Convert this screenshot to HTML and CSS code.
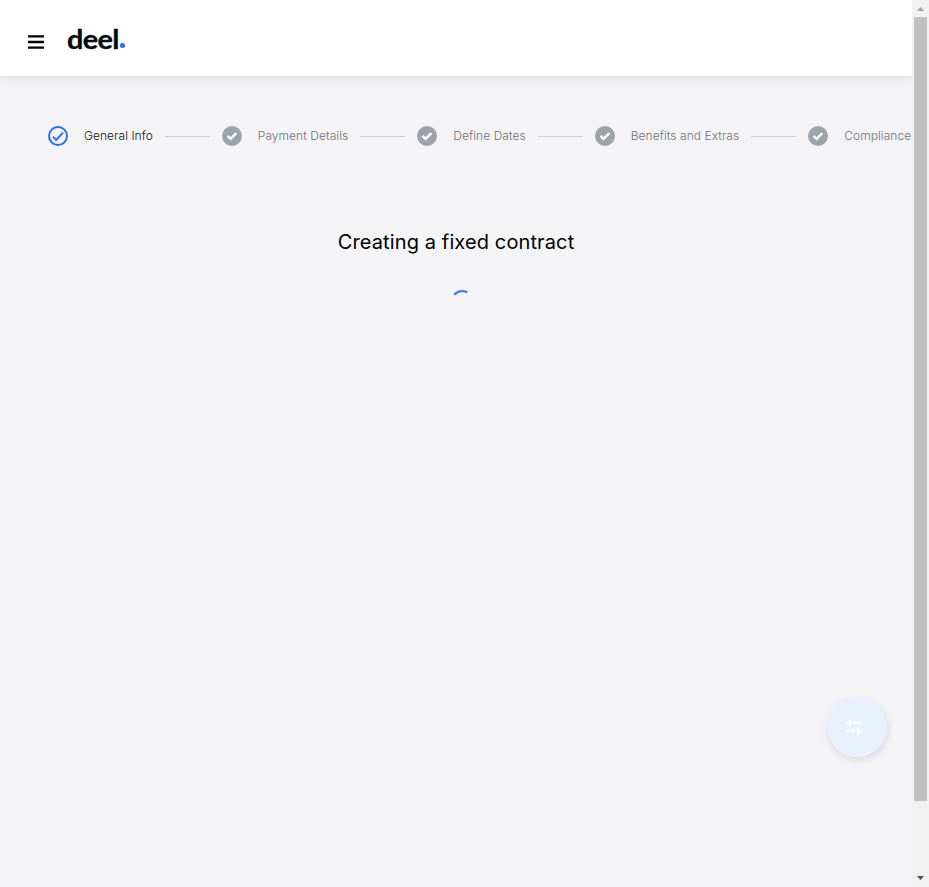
FILE: index.html
```html
<!DOCTYPE html>
<html lang="en">
<head>
<meta charset="utf-8">
<title>Deel</title>
<link rel="stylesheet" href="styles.css">
</head>
<body>
<div class="window">
  <div class="app">
    <header class="header">
      <svg class="menu" width="16" height="14" viewBox="0 0 16 14"><path d="M0 1.3h16M0 7h16M0 12.7h16" stroke="#000" stroke-width="2.3"/></svg>
      <div class="logo"><span class="word">deel</span><span class="dot"></span></div>
    </header>
    <nav class="stepper">
      <div class="step active"><svg class="mark" viewBox="0 0 20 20"><circle cx="10" cy="10" r="9" fill="none" stroke="#2b6cf6" stroke-width="2"/><path d="M5 10.6l3.2 3.2 6.8-7.1" fill="none" stroke="#2b6cf6" stroke-width="1.9"/></svg><span class="label">General Info</span></div>
      <div class="line"></div>
      <div class="step"><svg class="mark" viewBox="0 0 20 20"><circle cx="10" cy="10" r="10" fill="#9ea3a9"/><path d="M5.6 9.9l3 3 5.8-5.8" fill="none" stroke="#fff" stroke-width="2.4"/></svg><span class="label">Payment Details</span></div>
      <div class="line"></div>
      <div class="step"><svg class="mark" viewBox="0 0 20 20"><circle cx="10" cy="10" r="10" fill="#9ea3a9"/><path d="M5.6 9.9l3 3 5.8-5.8" fill="none" stroke="#fff" stroke-width="2.4"/></svg><span class="label">Define Dates</span></div>
      <div class="line"></div>
      <div class="step"><svg class="mark" viewBox="0 0 20 20"><circle cx="10" cy="10" r="10" fill="#9ea3a9"/><path d="M5.6 9.9l3 3 5.8-5.8" fill="none" stroke="#fff" stroke-width="2.4"/></svg><span class="label">Benefits and Extras</span></div>
      <div class="line"></div>
      <div class="step"><svg class="mark" viewBox="0 0 20 20"><circle cx="10" cy="10" r="10" fill="#9ea3a9"/><path d="M5.6 9.9l3 3 5.8-5.8" fill="none" stroke="#fff" stroke-width="2.4"/></svg><span class="label">Compliance</span></div>
    </nav>
    <main class="content">
      <h1 class="title">Creating a fixed contract</h1>
      <svg class="spinner" width="20" height="20" viewBox="0 0 20 20"><path d="M3.2 6.8C6.5 3.2 11.5 2.2 16.3 4.3" fill="none" stroke="#3d7df6" stroke-width="2.2"/></svg>
    </main>
    <button class="fab" aria-label="Settings"><svg width="16" height="16" viewBox="0 0 16 16"><path d="M0 4h5M6.5 4H16M0 12h9M11 12h5M4 0v8M12 8v8" fill="none" stroke="#fff" stroke-width="2.4"/></svg></button>
  </div>
  <div class="scrollbar">
    <svg class="arrow" width="17" height="17" viewBox="0 0 17 17"><path d="M5 11h7L8.5 7z" fill="#a3a3a3"/></svg>
    <div class="thumb"></div>
    <svg class="arrow" width="17" height="17" viewBox="0 0 17 17"><path d="M5 6h7L8.5 10z" fill="#505050"/></svg>
  </div>
</div>
</body>
</html>
```
FILE: styles.css
```css
* { box-sizing: border-box; }
body { margin: 0; font-family: Inter, sans-serif; background: #f4f4f7; overflow: hidden; }
.window { display: flex; height: 887px; }
.app { position: relative; width: 912px; overflow: hidden; }
.header { display: flex; height: 76px; padding: 0 28px; background: #fff; box-shadow: 0 2px 12px rgba(40, 40, 90, .12); }
.menu { margin-top: 35px; }
.logo { display: flex; margin: 22px 0 0 23px; height: 34px; color: #050b12; }
.word { width: 53px; font: 700 26px/34px Lato, sans-serif; letter-spacing: -.6px; -webkit-text-stroke: .3px #050b12; transform: scaleX(1.11); transform-origin: left; }
.dot { width: 5px; height: 5px; margin-top: 21px; border-radius: 50%; background: #2b6cf6; }
.stepper { display: flex; align-items: center; width: max-content; margin-top: 50px; padding-left: 48px; height: 20px; }
.step { display: flex; align-items: center; gap: 16px; color: #707174; }
.active { color: #111; }
.mark { width: 20px; height: 20px; flex: none; }
.label { font-size: 12px; line-height: 20px; font-weight: 300; letter-spacing: .055px; white-space: nowrap; }
.line { width: 45px; height: 1px; margin: 1px 12px 0; background: #cfcfd2; }
.content { display: flex; flex-direction: column; align-items: center; margin-top: 80px; }
.title { margin: 0; font-size: 20px; font-weight: 400; line-height: 32px; letter-spacing: .12px; color: #000; }
.spinner { margin: 30px 0 0 10px; }
.fab { position: absolute; left: 827px; top: 697px; width: 60px; height: 60px; padding: 0 6px 0 0; border: 0; border-radius: 50%; background: #e8f0fe; box-shadow: 1px 3px 9px rgba(0, 0, 0, .1); display: flex; align-items: center; justify-content: center; }
.scrollbar { display: flex; flex-direction: column; width: 17px; background: #f1f1f1; }
.arrow { display: block; }
.thumb { width: 13px; height: 784px; margin: 0 2px 69px; background: #c1c1c1; }
```
